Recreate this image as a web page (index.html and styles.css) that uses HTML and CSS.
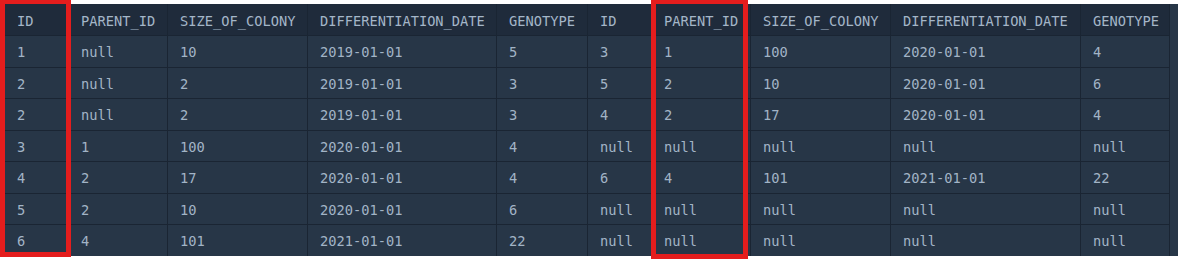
FILE: index.html
```html
<!DOCTYPE html>
<html>
<head>
<meta charset="utf-8">
<link rel="stylesheet" href="styles.css">
</head>
<body>
<div class="page">
  <div class="grid-wrap">
    <table class="grid">
      <colgroup>
        <col class="c-id"><col class="c-pid"><col class="c-size"><col class="c-date"><col class="c-geno">
        <col class="c-id"><col class="c-pid"><col class="c-size"><col class="c-date2"><col class="c-geno2">
      </colgroup>
      <thead>
        <tr>
          <th>ID</th><th>PARENT_ID</th><th>SIZE_OF_COLONY</th><th>DIFFERENTIATION_DATE</th><th>GENOTYPE</th>
          <th>ID</th><th>PARENT_ID</th><th>SIZE_OF_COLONY</th><th>DIFFERENTIATION_DATE</th><th>GENOTYPE</th>
        </tr>
      </thead>
      <tbody>
        <tr><td>1</td><td>null</td><td>10</td><td>2019-01-01</td><td>5</td><td>3</td><td>1</td><td>100</td><td>2020-01-01</td><td>4</td></tr>
        <tr><td>2</td><td>null</td><td>2</td><td>2019-01-01</td><td>3</td><td>5</td><td>2</td><td>10</td><td>2020-01-01</td><td>6</td></tr>
        <tr><td>2</td><td>null</td><td>2</td><td>2019-01-01</td><td>3</td><td>4</td><td>2</td><td>17</td><td>2020-01-01</td><td>4</td></tr>
        <tr><td>3</td><td>1</td><td>100</td><td>2020-01-01</td><td>4</td><td>null</td><td>null</td><td>null</td><td>null</td><td>null</td></tr>
        <tr><td>4</td><td>2</td><td>17</td><td>2020-01-01</td><td>4</td><td>6</td><td>4</td><td>101</td><td>2021-01-01</td><td>22</td></tr>
        <tr><td>5</td><td>2</td><td>10</td><td>2020-01-01</td><td>6</td><td>null</td><td>null</td><td>null</td><td>null</td><td>null</td></tr>
        <tr><td>6</td><td>4</td><td>101</td><td>2021-01-01</td><td>22</td><td>null</td><td>null</td><td>null</td><td>null</td><td>null</td></tr>
      </tbody>
    </table>
  </div>
  <div class="highlight hl-one"></div>
  <div class="highlight hl-two"></div>
</div>
</body>
</html>
```
FILE: styles.css
```css
html, body {
  margin: 0;
  padding: 0;
  background: #ffffff;
}

.page {
  position: relative;
  width: 1178px;
  height: 260px;
  padding: 4px 0 0 5px;
  box-sizing: border-box;
}

.grid-wrap {
  background: #273647;
  height: 252px;
  overflow: hidden;
}

.grid {
  border-collapse: separate;
  border-spacing: 0;
  table-layout: fixed;
  width: 1165px;
  font-family: "DejaVu Sans Mono", "Liberation Mono", monospace;
  font-size: 13.7px;
  color: #a2b4c6;
}

.c-id { width: 64px; }
.c-pid { width: 99px; }
.c-size { width: 140px; }
.c-date { width: 189px; }
.c-geno { width: 91px; }
.c-date2 { width: 190px; }
.c-geno2 { width: 89px; }

.grid th,
.grid td {
  padding: 2px 0 0 12px;
  text-align: left;
  font-weight: normal;
  white-space: nowrap;
  overflow: hidden;
  border-right: 1px solid #1a2533;
  border-bottom: 1px solid #1a2533;
  box-sizing: border-box;
  line-height: 16px;
}

.grid thead tr {
  height: 32px;
}

.grid th {
  background: #1f2b3b;
  color: #a4b6c8;
}

.grid tbody tr {
  height: 31.5px;
}

.grid td {
  background: #273647;
}

.highlight {
  position: absolute;
  top: 0;
  border: 5px solid #e41d1d;
  border-top-width: 4px;
  box-sizing: border-box;
}

.hl-one {
  left: 0;
  width: 71px;
  height: 257px;
}

.hl-two {
  left: 651px;
  width: 97px;
  height: 259px;
}
```
